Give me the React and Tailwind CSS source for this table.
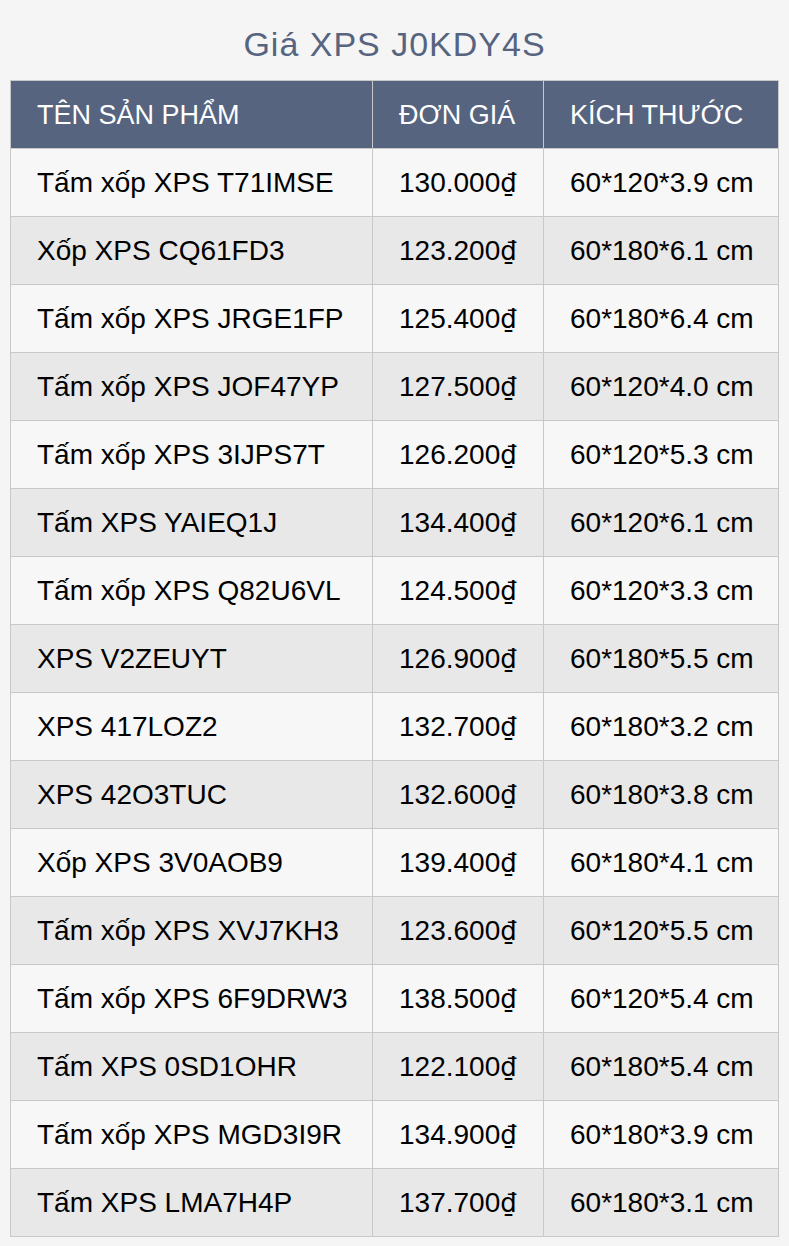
import React from 'react';

const rows = [
  ['Tấm xốp XPS T71IMSE', '130.000', '60*120*3.9 cm'],
  ['Xốp XPS CQ61FD3', '123.200', '60*180*6.1 cm'],
  ['Tấm xốp XPS JRGE1FP', '125.400', '60*180*6.4 cm'],
  ['Tấm xốp XPS JOF47YP', '127.500', '60*120*4.0 cm'],
  ['Tấm xốp XPS 3IJPS7T', '126.200', '60*120*5.3 cm'],
  ['Tấm XPS YAIEQ1J', '134.400', '60*120*6.1 cm'],
  ['Tấm xốp XPS Q82U6VL', '124.500', '60*120*3.3 cm'],
  ['XPS V2ZEUYT', '126.900', '60*180*5.5 cm'],
  ['XPS 417LOZ2', '132.700', '60*180*3.2 cm'],
  ['XPS 42O3TUC', '132.600', '60*180*3.8 cm'],
  ['Xốp XPS 3V0AOB9', '139.400', '60*180*4.1 cm'],
  ['Tấm xốp XPS XVJ7KH3', '123.600', '60*120*5.5 cm'],
  ['Tấm xốp XPS 6F9DRW3', '138.500', '60*120*5.4 cm'],
  ['Tấm XPS 0SD1OHR', '122.100', '60*180*5.4 cm'],
  ['Tấm xốp XPS MGD3I9R', '134.900', '60*180*3.9 cm'],
  ['Tấm XPS LMA7H4P', '137.700', '60*180*3.1 cm'],
];

export default function App() {
  return (
    <div className="min-h-[1246px] bg-[#f5f5f5] px-[10px] pt-[24px] font-['Liberation_Sans',Arial,sans-serif]">
      <h1 className="text-center text-[34px] tracking-[1px] leading-[40px] text-[#56647f] mb-[16px]">Giá XPS J0KDY4S</h1>
      <table className="w-full border-collapse text-[28px] leading-[32px] text-black">
        <thead>
          <tr className="bg-[#56647f] text-white h-[68px] text-[27px]">
            <th className="border border-[#c8c8c8] text-left font-normal pl-[26px] w-[362px]">TÊN SẢN PHẨM</th>
            <th className="border border-[#c8c8c8] text-left font-normal pl-[26px] w-[171px]">ĐƠN GIÁ</th>
            <th className="border border-[#c8c8c8] text-left font-normal pl-[26px]">KÍCH THƯỚC</th>
          </tr>
        </thead>
        <tbody>
          {rows.map((r, i) => (
            <tr key={i} className={i % 2 === 0 ? 'bg-[#f7f7f7] h-[68px]' : 'bg-[#e8e8e8] h-[68px]'}>
              <td className="border border-[#c8c8c8] pl-[26px]">{r[0]}</td>
              <td className="border border-[#c8c8c8] pl-[26px]">
                {r[1]}<span className="font-['DejaVu_Sans',sans-serif] text-[26px]">₫</span>
              </td>
              <td className="border border-[#c8c8c8] pl-[26px]">{r[2]}</td>
            </tr>
          ))}
        </tbody>
      </table>
    </div>
  );
}
